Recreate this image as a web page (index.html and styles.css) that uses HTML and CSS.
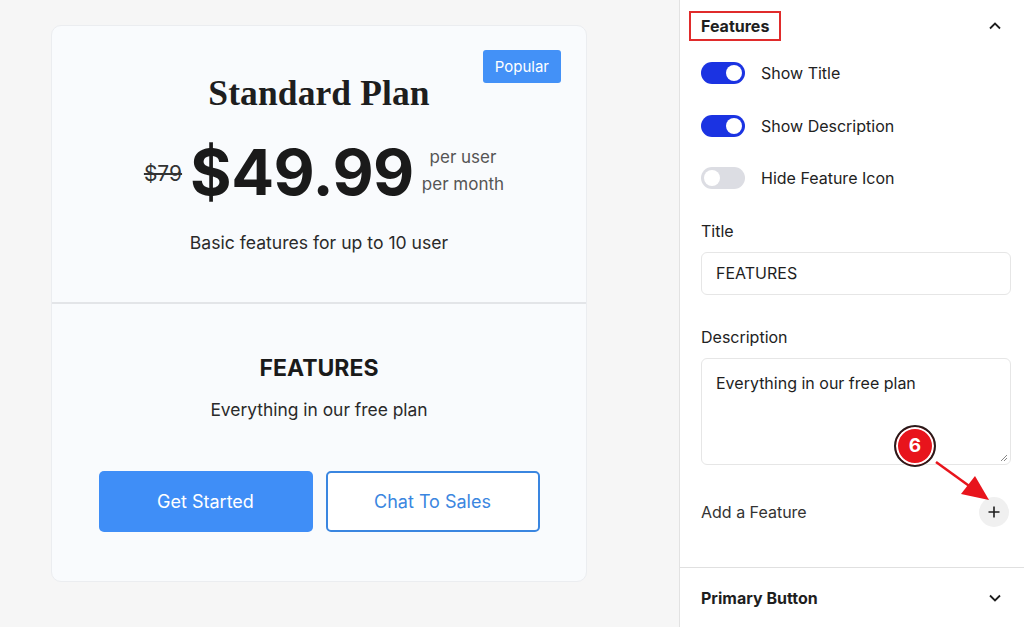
FILE: index.html
```html
<!DOCTYPE html>
<html lang="en">
<head>
    <meta charset="UTF-8">
    <meta name="viewport" content="width=device-width, initial-scale=1.0">
    <title>Pricing Table - Features Settings</title>
    <link rel="stylesheet" href="styles.css">
</head>
<body>

    <!-- Preview canvas -->
    <main class="preview">
        <div class="plan-card">
            <section class="plan-head">
                <span class="badge">Popular</span>
                <h2 class="plan-title">Standard Plan</h2>
                <div class="price-row">
                    <span class="old-price">$79</span>
                    <span class="price">$49.99</span>
                    <span class="period">per user<br>per month</span>
                </div>
                <p class="plan-desc">Basic features for up to 10 user</p>
            </section>
            <section class="plan-features">
                <h3>FEATURES</h3>
                <p>Everything in our free plan</p>
                <div class="plan-buttons">
                    <button class="btn btn-primary">Get Started</button>
                    <button class="btn btn-outline">Chat To Sales</button>
                </div>
            </section>
        </div>
    </main>

    <!-- Settings sidebar -->
    <aside class="sidebar">
        <div class="panel">
            <div class="panel-header">
                <span class="panel-title highlighted">Features</span>
                <svg class="chevron" width="16" height="16" viewBox="0 0 16 16"><path d="M3 10.5 8 5.5l5 5" fill="none" stroke="#1e1e1e" stroke-width="1.8"/></svg>
            </div>

            <div class="toggle-row">
                <span class="toggle on"></span>
                <span>Show Title</span>
            </div>
            <div class="toggle-row">
                <span class="toggle on"></span>
                <span>Show Description</span>
            </div>
            <div class="toggle-row">
                <span class="toggle"></span>
                <span>Hide Feature Icon</span>
            </div>

            <label class="field-label">Title</label>
            <div class="text-input">FEATURES</div>

            <label class="field-label">Description</label>
            <div class="text-area">
                Everything in our free plan
                <svg class="resize" width="10" height="10" viewBox="0 0 10 10"><path d="M9 3 3 9M9 6 6 9" stroke="#888" stroke-width="1"/></svg>
            </div>

            <div class="add-row">
                <span>Add a Feature</span>
                <span class="add-btn">
                    <svg width="14" height="14" viewBox="0 0 14 14"><path d="M7 1.5v11M1.5 7h11" stroke="#1e1e1e" stroke-width="1.6"/></svg>
                </span>
            </div>

            <!-- tutorial marker -->
            <span class="step-marker">6</span>
            <svg class="step-arrow" width="70" height="60" viewBox="0 0 70 60">
                <path d="M2 2 38 28" stroke="#e8141c" stroke-width="2.5"/>
                <polygon points="55,40 27,34 41,16" fill="#e8141c"/>
            </svg>
        </div>

        <div class="panel collapsed">
            <div class="panel-header">
                <span class="panel-title">Primary Button</span>
                <svg class="chevron" width="16" height="16" viewBox="0 0 16 16"><path d="M3 5.5 8 10.5l5-5" fill="none" stroke="#1e1e1e" stroke-width="1.8"/></svg>
            </div>
        </div>
    </aside>

</body>
</html>
```

FILE: styles.css
```css
/* Reset */
* {
    margin: 0;
    padding: 0;
    box-sizing: border-box;
}

body {
    font-family: 'Inter', 'Noto Sans', sans-serif;
    color: #1e1e1e;
    display: flex;
    height: 627px;
    overflow: hidden;
    background-color: #fff;
}

/* Preview area */
.preview {
    width: 680px;
    flex-shrink: 0;
    background-color: #f6f6f6;
    border-right: 1px solid #e2e2e2;
    padding: 25px 0 0 51px;
}

.plan-card {
    width: 536px;
    height: 557px;
    background-color: #f9fbfd;
    border: 1px solid #ebedf0;
    border-radius: 10px;
}

.plan-head {
    position: relative;
    height: 278px;
    border-bottom: 2px solid #e3e5e8;
    text-align: center;
    padding-top: 45px;
}

.badge {
    position: absolute;
    top: 24px;
    right: 25px;
    background-color: #4391f7;
    color: #fff;
    font-size: 15px;
    padding: 0 12px;
    height: 33px;
    line-height: 33px;
    border-radius: 3px;
}

.plan-title {
    font-family: 'Liberation Serif', serif;
    font-size: 35.5px;
    font-weight: 700;
    line-height: 44px;
    color: #1e1e1e;
    letter-spacing: 0.1px;
}

.price-row {
    display: flex;
    align-items: center;
    justify-content: center;
    gap: 8px;
    margin-top: 22px;
    height: 70px;
    padding-left: 10px;
}

.old-price {
    font-size: 21px;
    color: #333;
    text-decoration: line-through;
    margin-top: 2px;
}

.price {
    font-size: 63.5px;
    font-weight: 700;
    letter-spacing: -0.5px;
    color: #1a1a1a;
    line-height: 70px;
}

.period {
    font-size: 17px;
    line-height: 27px;
    color: #555;
    text-align: center;
    margin-top: -2px;
}

.plan-desc {
    margin-top: 25px;
    font-size: 17.6px;
    color: #2a2a2a;
}

.plan-features {
    text-align: center;
    padding-top: 50px;
}

.plan-features h3 {
    font-size: 23px;
    font-weight: 700;
    line-height: 28px;
    color: #1a1a1a;
}

.plan-features p {
    margin-top: 16px;
    font-size: 17.4px;
    line-height: 24px;
    color: #2a2a2a;
}

.plan-buttons {
    display: flex;
    justify-content: center;
    gap: 13px;
    margin-top: 49px;
}

.btn {
    width: 214px;
    height: 61px;
    font-family: inherit;
    font-size: 18px;
    border-radius: 5px;
    cursor: pointer;
}

.btn-primary {
    background-color: #3f8ef7;
    color: #fff;
    border: none;
}

.btn-outline {
    background-color: #fff;
    color: #3a86e0;
    border: 2px solid #3a86e0;
}

/* Sidebar */
.sidebar {
    flex: 1;
    background-color: #fff;
}

.panel {
    position: relative;
    padding: 0 13px 0 21px;
    border-bottom: 1px solid #e0e0e0;
    height: 568px;
}

.panel.collapsed {
    height: auto;
    border-bottom: none;
}

.panel-header {
    display: flex;
    align-items: center;
    justify-content: space-between;
    height: 51px;
    padding-right: 8px;
}

.panel.collapsed .panel-header {
    height: 60px;
}

.panel-title {
    font-size: 16px;
    font-weight: 700;
}

.panel-title.highlighted {
    border: 2px solid #e02b2b;
    margin-left: -12px;
    padding: 3px 10px 3px 10px;
}

.toggle-row {
    display: flex;
    align-items: center;
    gap: 16px;
    height: 52.5px;
    font-size: 16px;
    color: #222;
}

.panel-header + .toggle-row {
    margin-top: -4px;
}

.toggle {
    position: relative;
    width: 44px;
    height: 22px;
    border-radius: 11px;
    background-color: #dcdde3;
}

.toggle::after {
    content: '';
    position: absolute;
    top: 3px;
    left: 3px;
    width: 16px;
    height: 16px;
    border-radius: 50%;
    background-color: #fff;
}

.toggle.on {
    background-color: #1b33e2;
}

.toggle.on::after {
    left: 25px;
}

.field-label {
    display: block;
    font-size: 16px;
    color: #222;
    margin-top: 16px;
    line-height: 20px;
}

.text-input {
    margin-top: 11px;
    height: 43px;
    border: 1px solid #e6e6e6;
    border-radius: 6px;
    padding: 0 14px;
    line-height: 41px;
    font-size: 16px;
    color: #1e1e1e;
}

.text-input + .field-label {
    margin-top: 32px;
}

.text-area {
    position: relative;
    margin-top: 11px;
    height: 107px;
    border: 1px solid #e6e6e6;
    border-radius: 6px;
    padding: 14px 14px;
    font-size: 16px;
    color: #1e1e1e;
}

.resize {
    position: absolute;
    right: 2px;
    bottom: 2px;
}

.add-row {
    display: flex;
    align-items: center;
    justify-content: space-between;
    margin-top: 32px;
    font-size: 16px;
    color: #333;
}

.add-btn {
    width: 30px;
    height: 30px;
    border-radius: 50%;
    background-color: #f0f0f0;
    display: flex;
    align-items: center;
    justify-content: center;
    margin-right: 2px;
}

.step-marker {
    position: absolute;
    left: 214px;
    top: 425px;
    width: 42px;
    height: 42px;
    border-radius: 50%;
    background-color: #e8141c;
    border: 2px solid #2a1a1a;
    box-shadow: inset 0 0 0 2px #fff;
    color: #fff;
    font-size: 19px;
    font-weight: 700;
    text-align: center;
    line-height: 38px;
}

.step-arrow {
    position: absolute;
    left: 254px;
    top: 460px;
}
```
